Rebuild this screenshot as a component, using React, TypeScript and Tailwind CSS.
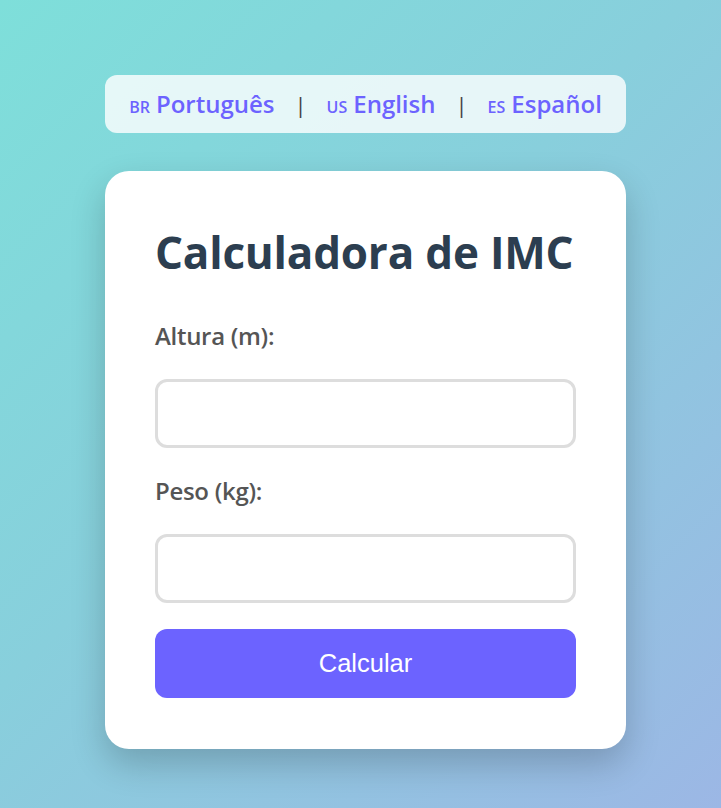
const langs = [
    { flag: "BR", name: "Português" },
    { flag: "US", name: "English" },
    { flag: "ES", name: "Español" },
]

const Field = ({ label }: { label: string }) => {
    return (
        <>
            <label className="block text-[24px] leading-[32px] tracking-[-0.3px] font-semibold text-[#555]">{label}</label>
            <input
                type="number"
                className="block w-full h-[69px] rounded-[12px] border-[3px] border-[#ddd] bg-white px-4 text-[22px] outline-none"
            />
        </>
    )
}

const App = () => {
    return (
        <div
            className="min-h-[808px] w-full bg-[linear-gradient(135deg,#7edfda_0%,#88cfdc_45%,#9cb7e5_100%)] flex flex-col items-center pt-[75px] pl-[10px]"
            style={{ fontFamily: '"Open Sans", "Noto Sans", sans-serif' }}
        >
            <nav className="w-[521px] h-[58px] rounded-[12px] bg-white/80 flex items-center justify-center">
                {langs.map((l, i) => (
                    <div key={l.flag} className="flex items-center">
                        {i > 0 && <span className="mx-[20px] text-[22px] text-[#444]">|</span>}
                        <a className="flex items-baseline gap-[6px] text-[#6c63ff] font-semibold cursor-pointer">
                            <span className="text-[16px]">{l.flag}</span>
                            <span className="text-[24px]">{l.name}</span>
                        </a>
                    </div>
                ))}
            </nav>

            <div className="mt-[38px] w-[521px] rounded-[24px] bg-white px-[50px] pt-[52px] pb-[51px] shadow-[0_15px_35px_rgba(0,0,0,0.2)]">
                <h1 className="text-[44px] leading-[59px] tracking-[-0.2px] whitespace-nowrap font-bold text-[#2c3e50] mb-[38px]">
                    Calculadora de IMC
                </h1>
                <div className="flex flex-col gap-[27px]">
                    <Field label="Altura (m):" />
                    <Field label="Peso (kg):" />
                    <button
                        className="-mt-[1px] h-[69px] w-full rounded-[12px] bg-[#6c63ff] text-white text-[25.5px]"
                        style={{ fontFamily: '"Liberation Sans", Arial, sans-serif' }}
                    >
                        Calcular
                    </button>
                </div>
            </div>
        </div>
    )
}

export default App
